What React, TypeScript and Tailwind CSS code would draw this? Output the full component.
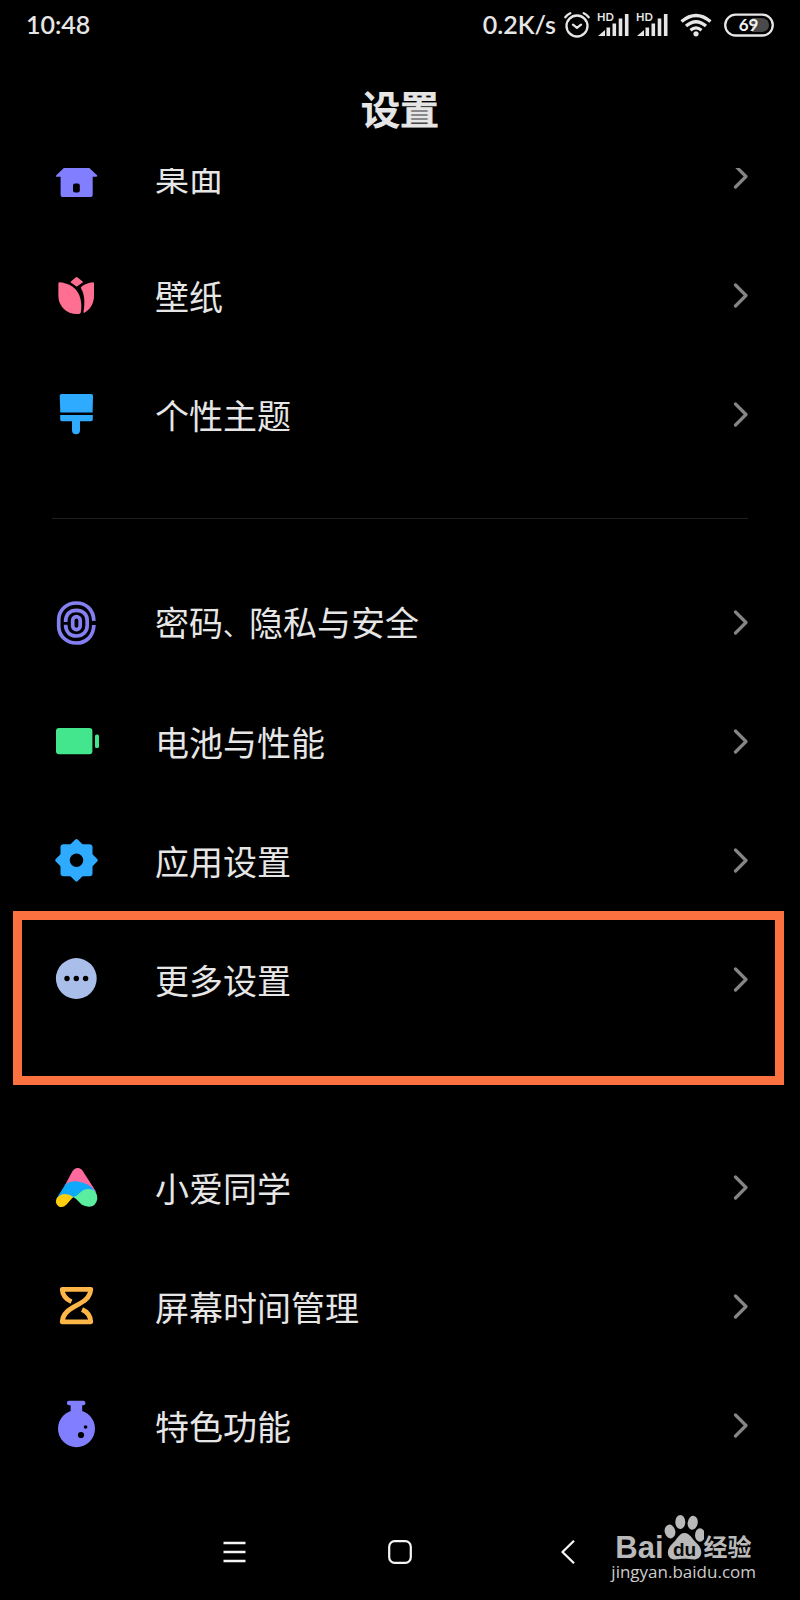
import type { ReactNode } from "react";

type Item = { label: ReactNode; icon: ReactNode; highlighted?: boolean };

function Glyph({ children }: { children: ReactNode }) {
  return (
    <svg viewBox="0 0 49 49" className="h-[49px] w-[49px] shrink-0 overflow-visible" fill="none" aria-hidden="true">
      {children}
    </svg>
  );
}

const HomeIcon = () => (
  <Glyph>
    <path d="M4.5 23 24.5 4 44.800 23Q46 24.800 44 24.800H40.700V43Q40.700 45 38.700 45H10.600Q8.600 45 8.600 43V24.800H5Q3.200 24.800 4.500 23Z" fill="#817eff" />
    <rect x="21" y="31.5" width="6.8" height="9" rx="2" fill="#000" />
  </Glyph>
);

const TulipIcon = () => (
  <Glyph>
    <g fill="#ff6f91">
      <path d="M24 6.2Q24.6 5.8 25.3 6.2L30.6 10.4Q31.1 11 30.6 11.5L25.3 15.2Q24.6 15.6 24 15.2L18.9 11.5Q18.3 11 18.9 10.4Z" />
      <path d="M6.4 12.4Q6.4 11.1 7.8 11.2C17.5 12.2 24 17 27 23.5C29.8 30 29.6 37 28.8 41.6Q28.5 42.8 27 43C15 44 6.4 35.5 6.4 25Z" />
      <path d="M29.200 16C32.500 13.200 36.800 11.700 40.800 11.300Q42 11.200 42 12.400V25C42 32.500 38 38.600 32.800 41.500Q31.300 42.200 31.500 41C33 31.500 32.800 24 29 17.300Q28.500 16.600 29.200 16Z" />
    </g>
  </Glyph>
);

const BrushIcon = () => (
  <Glyph>
    <g fill="#2eaaff">
      <path d="M9.700 4H39.300Q41 4 41 5.700L40.600 22.500H8.300L7.700 5.700Q7.700 4 9.700 4Z" />
      <path d="M8.200 25H40.800V29.500Q40.800 31.300 39 31.300H28V40.200A4 4 0 0 1 20 40.200V31.300H10Q8.200 31.300 8.200 29.500Z" />
    </g>
  </Glyph>
);

const FingerprintIcon = () => (
  <Glyph>
    <g stroke="#8580f2" strokeWidth="3.700">
      <path d="M41.900 22.800C41.400 11.500 34 5 24.400 5C14.500 5 6.700 12 6.700 22V28C6.700 38 14.500 45 24.400 45C34 45 41.400 38.500 41.900 27" />
      <path d="M13.600 24C13.600 16 18 12.300 24.400 12.300C31 12.300 35.200 16.500 35.200 22.500V27.500C35.200 33.500 31 38 24.400 38C18 38 13.800 34 13.600 26.800" />
      <rect x="20.700" y="18.600" width="7.500" height="13" rx="3.750" />
    </g>
  </Glyph>
);

const BatteryIcon = () => (
  <Glyph>
    <rect x="4" y="11" width="36.400" height="26.200" rx="3" fill="#43e58d" />
    <rect x="43" y="17.600" width="4" height="13.400" rx="1.600" fill="#43e58d" />
  </Glyph>
);

const GearIcon = () => (
  <Glyph>
    <g fill="#2eaaff">
      <rect x="8.500" y="8.300" width="32" height="32" rx="3" />
      <path d="M24.500 4.800 44 24.300 24.500 43.800 5 24.300Z" stroke="#2eaaff" strokeWidth="3.500" strokeLinejoin="round" />
    </g>
    <circle cx="24.500" cy="24.300" r="6.700" fill="#000" />
  </Glyph>
);

const MoreIcon = () => (
  <Glyph>
    <circle cx="24.300" cy="23.500" r="20.400" fill="#a9bfea" />
    <g fill="#000">
      <circle cx="15" cy="23.500" r="2.700" />
      <circle cx="24.300" cy="23.500" r="2.700" />
      <circle cx="33.600" cy="23.500" r="2.700" />
    </g>
  </Glyph>
);

const AssistantIcon = () => (
  <Glyph>
    <path d="M12.500 23 19.500 10C22.500 3.400 29 3.400 32 10L44 28.500 30 30Z" fill="#ff6a9e" />
    <path d="M4.600 35.500 13.300 21.500Q18 18 24.500 18.300Q37 19.500 44.300 29.500L30 33 21.200 34.500Z" fill="#0fa9fb" />
    <path d="M4.600 35.600Q8 30.800 13.500 31Q18.600 31.300 21.200 34L14.500 41.500Q10.500 45.500 6.500 43.200Q2.600 40.200 4.600 35.600Z" fill="#ffce0f" />
    <path d="M21.200 34Q25 33.200 28 29.800C31 26 36 25 41 26.700Q45.600 30 45.300 36Q44 43.500 37 43.700Q31 43.500 27.800 39.800Q25 36 21.200 34Z" fill="#5ceea0" />
  </Glyph>
);

const HourglassIcon = () => (
  <Glyph>
    <path
      d="M19.500 19.600C14 17.300 10.600 13.500 10.200 7.300H38.800C38.400 14 34.500 18 28 21.500L21 25.400C14.500 29 10.600 33 10.200 39.800H38.800C38.400 33.500 35 29.700 30 27.500"
      stroke="#ffb648"
      strokeWidth="4.800"
      strokeLinejoin="round"
    />
  </Glyph>
);

const FlaskIcon = () => (
  <Glyph>
    <g fill="#817eff">
      <rect x="15" y="-.3" width="18.400" height="4.600" rx="2" />
      <path d="M18.600 3H30.200V14H18.600Z" />
      <circle cx="24.500" cy="27.700" r="18.500" />
    </g>
    <circle cx="29" cy="34" r="3.100" fill="#000" />
    <circle cx="33.600" cy="26" r="1.800" fill="#000" />
  </Glyph>
);

const groups: Item[][] = [
  [
    { label: "桌面", icon: <HomeIcon /> },
    { label: "壁纸", icon: <TulipIcon /> },
    { label: "个性主题", icon: <BrushIcon /> },
  ],
  [
    {
      label: (
        <>
          密码<span className="text-[26px]">、</span>隐私与安全
        </>
      ),
      icon: <FingerprintIcon />,
    },
    { label: "电池与性能", icon: <BatteryIcon /> },
    { label: "应用设置", icon: <GearIcon /> },
    { label: "更多设置", icon: <MoreIcon />, highlighted: true },
  ],
  [
    { label: "小爱同学", icon: <AssistantIcon /> },
    { label: "屏幕时间管理", icon: <HourglassIcon /> },
    { label: "特色功能", icon: <FlaskIcon /> },
  ],
];

function Row({ item }: { item: Item }) {
  return (
    <li className="relative">
      <a href="#" className="flex h-[119px] items-center gap-[54px] px-[52px]">
        {item.icon}
        <span className="flex-1 text-[34px] leading-[49px] whitespace-nowrap">{item.label}</span>
        <svg viewBox="0 0 15 25" className="h-[25px] w-[15px] shrink-0" fill="none" aria-hidden="true">
          <path d="M2.500 2 13 12.500 2.500 23" stroke="#858585" strokeWidth="3.200" strokeLinecap="round" strokeLinejoin="round" />
        </svg>
      </a>
      {item.highlighted && (
        <div className="pointer-events-none absolute -top-[9px] right-4 left-[13px] h-[174px] border-[9px] border-[#fb7140]" />
      )}
    </li>
  );
}

function Signal() {
  return (
    <svg viewBox="0 0 31 24" className="h-6 w-[31px] overflow-visible" fill="#e6e6e6" role="img" aria-label="HD">
      <text x="-1" y="8" className="text-[11px] font-bold">HD</text>
      <path d="M0 23 7 17V23Z" />
      <rect x="8.500" y="14.500" width="3.600" height="8.500" />
      <rect x="14.500" y="10.500" width="3.600" height="12.500" />
      <rect x="20.700" y="5.500" width="3.600" height="17.500" />
      <rect x="26.900" y="1" width="3.600" height="22" />
    </svg>
  );
}

function StatusBar() {
  return (
    <div className="flex h-[50px] items-center justify-between px-[26px] font-[Lato,'Noto_Sans_CJK_SC',sans-serif] text-[25px] font-semibold">
      <span>10:48</span>
      <div className="flex items-center gap-3">
        <div className="flex items-center gap-2">
          <span>0.2K/s</span>
          <svg viewBox="0 0 26 26" className="h-[26px] w-[26px]" fill="none" stroke="#e6e6e6" strokeWidth="2.300" strokeLinecap="round" strokeLinejoin="round" aria-hidden="true">
            <circle cx="13" cy="14" r="10.500" />
            <path d="M1.300 5.200Q3.300 2.600 6.300 1.200M24.700 5.200Q22.700 2.600 19.700 1.200M9 12.700 13 15.800 17 12.700" />
          </svg>
          <Signal />
          <Signal />
        </div>
        <svg viewBox="0 0 32 24" className="h-6 w-8" fill="none" stroke="#e6e6e6" strokeWidth="3.300" aria-hidden="true">
          <path d="M1.500 8.500Q16-3.500 30.500 8.500M6 13Q16 4.500 26 13M10.500 17.300Q16 12.500 21.500 17.300" />
          <circle cx="16" cy="20.800" r="2.600" fill="#e6e6e6" stroke="none" />
        </svg>
        <svg viewBox="0 0 50 24" className="h-6 w-[50px]" fill="none" role="img" aria-label="69">
          <rect x="1.200" y="1.700" width="47.600" height="20.800" rx="10.400" stroke="#e6e6e6" strokeWidth="2.300" />
          <path d="M28 5H38Q45 6 45 12T38 19H28Z" fill="#4a4a4a" />
          <text x="24.500" y="18" textAnchor="middle" fill="#f2f2f2" className="text-[17px] font-bold">69</text>
        </svg>
      </div>
    </div>
  );
}

function Watermark() {
  return (
    <div className="absolute right-[44px] bottom-4 text-[#b9b9b9]">
      <div className="flex items-end pl-1">
        <span className="font-['Liberation_Sans',sans-serif] text-[31px] leading-[25px] font-bold">Bai</span>
        <svg viewBox="0 0 40 46" className="h-[46px] w-10" fill="#b9b9b9" aria-hidden="true">
          <ellipse cx="6" cy="17.500" rx="5.300" ry="7" transform="rotate(-12 6 17.500)" />
          <ellipse cx="16.300" cy="8" rx="5" ry="7" />
          <ellipse cx="28.700" cy="8.800" rx="5" ry="7" transform="rotate(10 28.700 8.800)" />
          <ellipse cx="36" cy="21" rx="5" ry="6.800" />
          <path d="M20.500 19C26 19 28 25 33 29.500C40 36 38 45.500 30 45.500C26 45.500 24 44.800 20.500 44.800C17 44.800 15 45.500 11 45.500C3 45.500 1.500 36 8 30C13.500 25 15 19 20.500 19Z" />
          <text x="20.500" y="41.500" textAnchor="middle" fill="#0a0a0a" className="font-['Liberation_Sans',sans-serif] text-[19px] font-bold">du</text>
        </svg>
        <span className="text-[24px] leading-[28px] font-bold">经验</span>
      </div>
      <div className="font-['Open_Sans',sans-serif] text-[17px] leading-[24px] text-[#cccccc]">jingyan.baidu.com</div>
    </div>
  );
}

export default function App() {
  return (
    <div className="relative flex min-h-screen flex-col bg-black font-['Noto_Sans_CJK_SC',sans-serif] text-[#e6e6e6]">
      <header>
        <StatusBar />
        <h1 className="flex h-[118px] items-center justify-center pb-1 text-[39px] font-medium [-webkit-text-stroke:1px]">设置</h1>
      </header>
      <main className="flex-1 overflow-hidden">
        <nav className="-mt-[51px]" aria-label="设置">
          {groups.map((group, i) => (
            <div key={i}>
              {i > 0 && <hr className="mx-[52px] my-[44px] border-t border-[#1f1f1f]" />}
              <ul>
                {group.map((item, j) => (
                  <Row key={j} item={item} />
                ))}
              </ul>
            </div>
          ))}
        </nav>
      </main>
      <footer className="flex h-24 items-center justify-center">
        <button type="button" aria-label="菜单" className="flex h-12 w-[166px] items-center justify-center">
          <svg viewBox="0 0 24 24" className="h-6 w-6" stroke="#f5f5f5" strokeWidth="2.300" aria-hidden="true">
            <path d="M1.500 3H23.500M1.500 12H23.500M1.500 21H23.500" />
          </svg>
        </button>
        <button type="button" aria-label="主页" className="flex h-12 w-[166px] items-center justify-center">
          <svg viewBox="0 0 24 24" className="h-6 w-6" fill="none" stroke="#f5f5f5" strokeWidth="2.200" aria-hidden="true">
            <rect x="1.200" y="1.200" width="21.600" height="21.600" rx="5.500" />
          </svg>
        </button>
        <button type="button" aria-label="返回" className="flex h-12 w-[166px] items-center justify-center">
          <svg viewBox="0 0 24 24" className="h-6 w-6" fill="none" stroke="#f5f5f5" strokeWidth="2.300" strokeLinejoin="round" aria-hidden="true">
            <path d="M20 .8 8.500 12 20 23.200" />
          </svg>
        </button>
      </footer>
      <Watermark />
    </div>
  );
}
